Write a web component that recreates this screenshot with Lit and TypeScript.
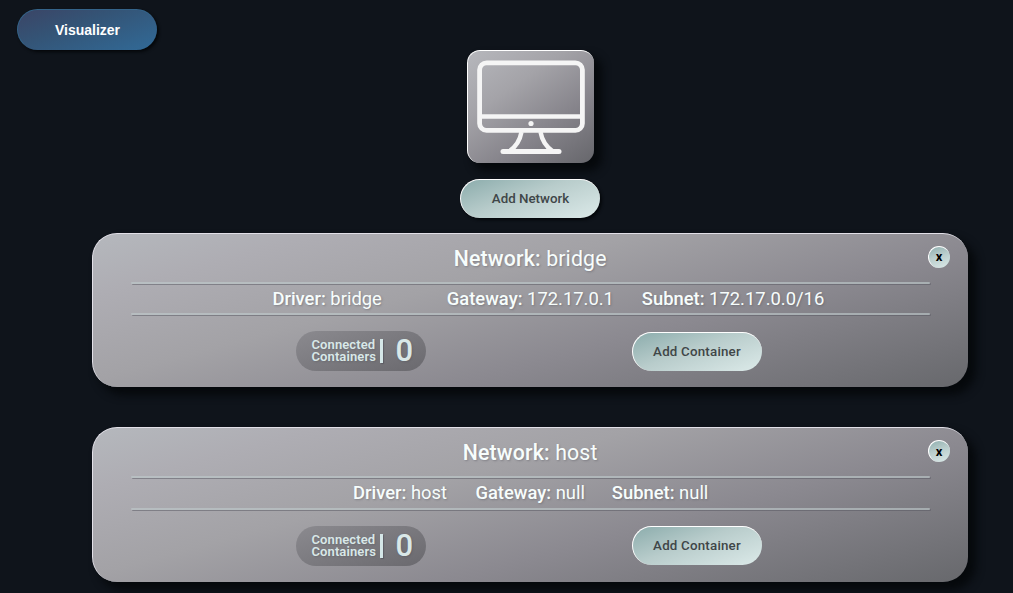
import { LitElement, html, css } from "lit";
import { customElement, property } from "lit/decorators.js";

@customElement("network-card")
class NetworkCard extends LitElement {
  @property() name = "";
  @property() gateway = "";
  @property() subnet = "";

  static styles = css`
    :host { display: block; }
    * { box-sizing: border-box; }
    .card {
      position: relative;
      width: 876px;
      height: 154.5px;
      padding: 0 37px 0 38.4px;
      border-radius: 25px;
      border: 1px solid transparent;
      border-width: 1px 0 0 1px;
      border-color: #e2e0e8;
      background: linear-gradient(165deg, #b5b8bd 0%, #aeadb3 16%, #a3a2a6 38%, #8b8990 64%, #67686c 100%) border-box;
      box-shadow: 7px 7px 8px 1px #06090c;
      color: #f7fdfc;
      text-shadow: 1px 1px 2px rgba(80, 80, 90, 0.4);
    }
    .title {
      height: 48px;
      padding: 12px 2px 0 0;
      font-size: 21.3px;
      line-height: 26px;
      text-align: center;
      letter-spacing: 0.15px;
    }
    b { font-weight: 500; }
    .line {
      width: 799px;
      height: 2px;
      border-radius: 1px;
      background: rgba(190, 202, 204, 0.62);
      box-shadow: 1px 1px 0 rgba(85, 85, 95, 0.5);
    }
    .facts {
      display: flex;
      height: 29.5px;
      padding-left: 141px;
      font-size: 18.4px;
      line-height: 30px;
      white-space: nowrap;
    }
    .driver { width: 174.4px; }
    .gateway { width: 195px; }
    .host { padding-left: 221.6px; }
    .host .driver { width: 122.4px; }
    .host .gateway { width: 136.4px; }
    .actions {
      display: flex;
      align-items: flex-start;
      padding: 15.9px 0 0 164.6px;
      gap: 206px;
    }
    .count {
      display: flex;
      align-items: center;
      width: 130px;
      height: 40px;
      padding-left: 15.5px;
      border-radius: 20px;
      background: linear-gradient(160deg, #8b8a8f, #6a696e);
      color: #d9e8e8;
      font-weight: 500;
    }
    .label { width: 68.5px; font-size: 13px; line-height: 12px; letter-spacing: 0.1px; font-weight: 600; }
    .label span { display: block; }
    .bar { width: 3px; height: 24px; background: #d5e7e8; box-shadow: 1px 1px 1px rgba(60, 60, 70, 0.4); }
    .num { margin-left: 12.5px; font-size: 31px; line-height: 40px; }
    .add, .close {
      font-family: Roboto, sans-serif;
      border: 1px solid transparent;
      border-width: 1px 0 0 1px;
      border-color: #fff;
      background: linear-gradient(160deg, #8aabab, #b8cccb 45%, #dceae9) border-box;
    }
    .add {
      width: 130px;
      height: 39px;
      margin-top: 0.6px;
      padding: 0 1px 1px 0;
      border-radius: 20px;
      color: #3f4648;
      font-size: 13.33px;
      font-weight: 500;
      letter-spacing: 0.2px;
    }
    .close {
      position: absolute;
      top: 12px;
      right: 18px;
      width: 22px;
      height: 22px;
      padding: 0 1px 1px 0;
      border-radius: 50%;
      color: #000;
      font: bold 13px/19px Roboto, sans-serif;
    }
  `;

  render() {
    return html`<section class="card">
      <div class="title"><b>Network:</b> ${this.name}</div>
      <div class="line"></div>
      <div class="facts ${this.name}">
        <span class="driver"><b>Driver:</b> ${this.name}</span>
        <span class="gateway"><b>Gateway:</b> ${this.gateway}</span>
        <span><b>Subnet:</b> ${this.subnet}</span>
      </div>
      <div class="line"></div>
      <div class="actions">
        <div class="count">
          <div class="label"><span>Connected</span><span>Containers</span></div>
          <span class="bar"></span>
          <span class="num">0</span>
        </div>
        <button class="add">Add Container</button>
      </div>
      <button class="close">x</button>
    </section>`;
  }
}

@customElement("app-root")
class AppRoot extends LitElement {
  static styles = css`
    :host {
      display: block;
      height: 593px;
      overflow: hidden;
      background: #0f141b;
      font-family: Roboto, sans-serif;
    }
    * { box-sizing: border-box; }
    header { height: 50px; padding: 9px 0 0 17px; }
    button { display: block; width: 140px; padding: 0; border-radius: 21px; }
    .visualizer {
      height: 41px;
      padding-left: 1px;
      border: 1px solid #34648a;
      border-right-color: transparent;
      border-bottom-color: transparent;
      background: linear-gradient(160deg, #3b4465, #345476 40%, #316a97) border-box;
      box-shadow: 2px 2px 3px #05080b;
      color: #fff;
      font: bold 14px "Liberation Sans", Arial, sans-serif;
    }
    main { display: flex; flex-direction: column; align-items: center; width: 1060px; }
    .machine {
      width: 127px;
      height: 113px;
      border-radius: 13px;
      border: 1px solid #fff;
      border-width: 1px 0 0 1px;
      background: linear-gradient(145deg, #b7b8bd 0%, #a4a3a8 34%, #86848b 66%, #66666b 100%) border-box;
      box-shadow: 7px 7px 8px 1px #06090c;
    }
    svg { display: block; }
    .add {
      height: 39px;
      margin: 16px 0 14.8px;
      padding-bottom: 2px;
      border: 1px solid #fff;
      border-width: 1px 0 0 1px;
      background: linear-gradient(160deg, #8aabab, #b8cccb 45%, #dceae9) border-box;
      box-shadow: 2px 2px 3px #05080b;
      color: #3f4648;
      font: 500 13.33px Roboto, sans-serif;
    }
    .networks { display: grid; gap: 40px; }
  `;

  render() {
    return html`
      <header><button class="visualizer">Visualizer</button></header>
      <main>
        <div class="machine">
          <svg width="126" height="112" viewBox="468 51 126 112" fill="none" stroke="#f5f5f5" stroke-width="4.8">
            <rect x="479.6" y="62.8" width="102.8" height="67.6" rx="7" />
            <path d="M480 116.5H582" stroke-width="4.4" />
            <circle cx="531" cy="123.5" r="2.6" fill="#f5f5f5" stroke="none" />
            <path d="M521.5 132C520 140 515.5 147 509.5 151M540.5 132C542 140 546.5 147 552.5 151" stroke-width="4.4" />
            <path d="M503 151.5H559" stroke-width="5" stroke-linecap="round" />
          </svg>
        </div>
        <button class="add">Add Network</button>
        <div class="networks">
          <network-card name="bridge" gateway="172.17.0.1" subnet="172.17.0.0/16"></network-card>
          <network-card name="host" gateway="null" subnet="null"></network-card>
        </div>
      </main>
    `;
  }
}
